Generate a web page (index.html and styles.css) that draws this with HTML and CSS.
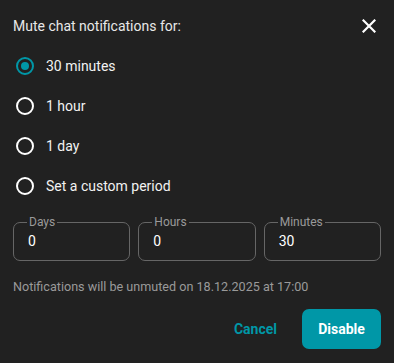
FILE: index.html
```html
<!DOCTYPE html>
<html>
    <head>
        <title>Mute chat</title>
        <meta charset="UTF-8">
        <meta name="viewport" content="width=device-width, initial-scale=1.0">
        <link rel="stylesheet" href="styles.css">
    </head>
    <body>
        <div class="dialog">
            <div class="header">
                <h1>Mute chat notifications for:</h1>
                <button type="button" class="close" aria-label="Close">
                    <svg width="14" height="14" viewBox="0 0 14 14">
                        <path d="M1.5 1.5 L12.5 12.5 M12.5 1.5 L1.5 12.5" stroke="#fff" stroke-width="2.2" stroke-linecap="square"/>
                    </svg>
                </button>
            </div>

            <div class="options">
                <label class="option"><span class="radio checked"></span>30 minutes</label>
                <label class="option"><span class="radio"></span>1 hour</label>
                <label class="option"><span class="radio"></span>1 day</label>
                <label class="option"><span class="radio"></span>Set a custom period</label>
            </div>

            <div class="fields">
                <fieldset class="field">
                    <legend>Days</legend>
                    <span class="value">0</span>
                </fieldset>
                <fieldset class="field">
                    <legend>Hours</legend>
                    <span class="value">0</span>
                </fieldset>
                <fieldset class="field">
                    <legend>Minutes</legend>
                    <span class="value">30</span>
                </fieldset>
            </div>

            <p class="note">Notifications will be unmuted on 18.12.2025 at 17:00</p>

            <div class="actions">
                <button type="button" class="btn-text">Cancel</button>
                <button type="button" class="btn-main">Disable</button>
            </div>
        </div>
    </body>
</html>
```

FILE: styles.css
```css
body {
    margin: 0;
    padding: 0;
    background-color: #212121;
    color: #fff;
    font-family: Roboto, "Liberation Sans", sans-serif;
}
.dialog {
    width: 394px;
    height: 363px;
    padding: 13px 13px 0 13px;
    box-sizing: border-box;
}
.header {
    display: flex;
    justify-content: space-between;
    align-items: center;
    height: 26px;
}
.header h1 {
    margin: 0;
    font-size: 14px;
    font-weight: 400;
    color: #e8e8e8;
}
.close {
    background: none;
    border: none;
    padding: 0;
    margin-right: 5px;
    width: 14px;
    height: 14px;
    display: flex;
    cursor: pointer;
}
.options {
    display: flex;
    flex-direction: column;
    margin-top: 7px;
}
.option {
    display: flex;
    align-items: center;
    height: 40px;
    font-size: 14px;
    color: #f2f2f2;
}
.radio {
    width: 14px;
    height: 14px;
    border: 2px solid #fff;
    border-radius: 50%;
    margin: 0 12px 0 3px;
    position: relative;
}
.radio.checked {
    border-color: #0097a7;
}
.radio.checked::after {
    content: "";
    position: absolute;
    top: 3px;
    left: 3px;
    width: 8px;
    height: 8px;
    border-radius: 50%;
    background-color: #0097a7;
}
.fields {
    display: grid;
    grid-template-columns: 1fr 1fr 1fr;
    gap: 8px;
    margin-top: 9px;
}
.field {
    margin: 0;
    border: 1px solid #666;
    border-radius: 7px;
    padding: 0 14px;
    height: 46px;
    box-sizing: border-box;
}
.field legend {
    font-size: 12px;
    color: #9a9a9a;
    padding: 0 2px;
    margin-left: -1px;
}
.value {
    display: block;
    font-size: 14px;
    margin-top: 4px;
}
.note {
    margin: 18px 0 0 0;
    font-size: 12.6px;
    color: #9a9a9a;
}
.actions {
    display: flex;
    justify-content: flex-end;
    align-items: center;
    gap: 25px;
    margin-top: 15px;
}
.btn-text {
    background: none;
    border: none;
    color: #0097a7;
    font-family: inherit;
    font-size: 14px;
    font-weight: 700;
    padding: 0;
    cursor: pointer;
}
.btn-main {
    background-color: #0097a7;
    border: none;
    color: #fff;
    font-family: inherit;
    font-size: 14px;
    font-weight: 700;
    width: 79px;
    height: 40px;
    border-radius: 7px;
    cursor: pointer;
}
```
